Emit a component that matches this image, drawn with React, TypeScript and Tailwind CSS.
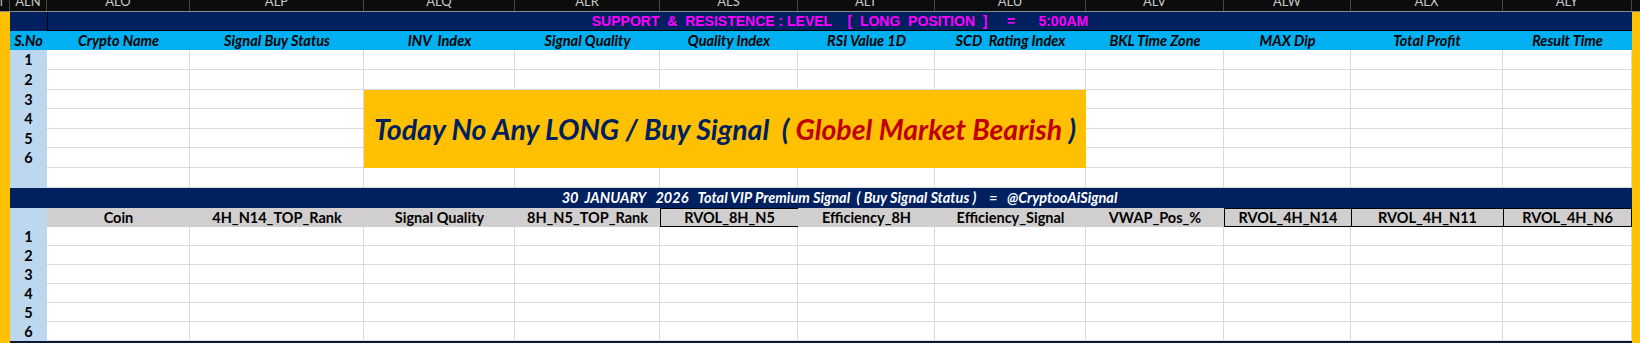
import React from "react";

// Excel-style signal sheet: column letters, two tables (long signals + VIP premium list).
const letters = ["ALN", "ALO", "ALP", "ALQ", "ALR", "ALS", "ALT", "ALU", "ALV", "ALW", "ALX", "ALY"];
const widths = [37, 143, 174, 151, 145, 138, 137, 151, 138, 127, 152, 129];

const topHeads = [
  "S.No",
  "Crypto Name",
  "Signal Buy Status",
  "INV  Index",
  "Signal Quality",
  "Quality Index",
  "RSI Value 1D",
  "SCD  Rating Index",
  "BKL Time Zone",
  "MAX Dip",
  "Total Profit",
  "Result Time",
];

const grayHeads = [
  "Coin",
  "4H_N14_TOP_Rank",
  "Signal Quality",
  "8H_N5_TOP_Rank",
  "RVOL_8H_N5",
  "Efficiency_8H",
  "Efficiency_Signal",
  "VWAP_Pos_%",
  "RVOL_4H_N14",
  "RVOL_4H_N11",
  "RVOL_4H_N6",
];

const calibri = "font-['Lato',_'Noto_Sans',_sans-serif]";

function NumCell({ n }: { n?: number }) {
  return (
    <div className={`flex items-center justify-center bg-[#bdd7ee] text-[14.5px] font-bold text-black ${calibri}`}>
      {n}
    </div>
  );
}

function Blank() {
  return <div className="border-r border-b border-[#dadada] bg-white" />;
}

function DataRow({ n, skip }: { n?: number; skip?: boolean }) {
  // skip = columns ALQ..ALU are covered by the merged yellow banner
  const cols = [1, 2, 3, 4, 5, 6, 7, 8, 9, 10, 11];
  return (
    <>
      <NumCell n={n} />
      {cols
        .filter((c) => !skip || c < 3 || c > 7)
        .map((c) => (
          <Blank key={c} />
        ))}
    </>
  );
}

export default function App() {
  return (
    <div className="h-[343px] w-[1640px] overflow-hidden bg-white">
      {/* column letters */}
      <div className="flex h-[12px] border-b border-[#8c8c8c] bg-[#0c0c0c] text-[13px] text-[#c6c6c6]">
        <div className={`flex w-[10px] shrink-0 justify-end overflow-hidden whitespace-nowrap border-r border-[#454545] pr-[6px] ${calibri}`}>
          <span className="-mt-[6px] leading-[14px]">ALM</span>
        </div>
        {letters.map((l, i) => (
          <div
            key={l}
            style={{ width: widths[i] }}
            className={`flex shrink-0 justify-center overflow-hidden border-r border-[#454545] ${calibri}`}
          >
            <span className="-mt-[6px] leading-[14px]">{l}</span>
          </div>
        ))}
        <div className="w-[8px] shrink-0" />
      </div>

      <div className="flex">
        <div className="w-[10px] shrink-0 bg-[#ffc000]" />

        <div className="grid grid-cols-[37px_143px_174px_151px_145px_138px_137px_151px_138px_127px_152px_129px] grid-rows-[19px_19px_20px_20px_19px_20px_19px_20px_20px_20px_19px_19px_19px_19px_19px_19px_19px_2px]">
          {/* title bar */}
          <div className="bg-[#002060]" />
          <div className="col-span-11 flex items-center justify-center border-b border-l border-black bg-[#002060]">
            <span className="whitespace-pre font-['Liberation_Sans',_Arial,_sans-serif] text-[14px] font-bold text-[#ff00ff]">
              {"SUPPORT  &  RESISTENCE : LEVEL    [  LONG  POSITION  ]     =      5:00AM"}
            </span>
          </div>

          {/* cyan headers */}
          {topHeads.map((h) => (
            <div
              key={h}
              className={`flex items-center justify-center whitespace-pre bg-[#00b0f0] text-[14.5px] font-bold italic text-black ${calibri}`}
            >
              {h}
            </div>
          ))}

          <div className="col-start-4 col-span-5 row-start-5 row-span-4 flex items-center justify-center bg-[#ffc000]">
            <span className={`whitespace-pre text-[28.5px] font-bold italic text-[#002060] ${calibri}`}>
              {"Today No Any LONG / Buy Signal  ( "}
              <span className="text-[#c00000]">Globel Market Bearish</span>
              {" )"}
            </span>
          </div>

          <DataRow n={1} />
          <DataRow n={2} />
          <DataRow n={3} skip />
          <DataRow n={4} skip />
          <DataRow n={5} skip />
          <DataRow n={6} skip />
          <DataRow />

          {/* VIP bar */}
          <div className="bg-[#002060]" />
          <div className="col-span-11 flex items-center justify-center bg-[#002060]">
            <span className={`whitespace-pre text-[14.5px] font-bold italic text-white ${calibri}`}>
              {"30  JANUARY   2026   Total VIP Premium Signal  ( Buy Signal Status )    =   @CryptooAiSignal"}
            </span>
          </div>

          {/* gray headers */}
          <div className="bg-[#bdd7ee]" />
          {grayHeads.map((h, i) => {
            const boxed = i === 4 || i >= 8 ? "border-l border-t border-b border-black" : "";
            const last = i === 10 ? "border-r" : "";
            return (
              <div
                key={h}
                className={`flex items-center justify-center bg-[#d0cece] text-[14.5px] font-bold text-black ${boxed} ${last} ${calibri}`}
              >
                {h}
              </div>
            );
          })}

          {[1, 2, 3, 4, 5, 6].map((n) => (
            <DataRow key={n} n={n} />
          ))}

          <div className="col-span-12 bg-[#0d1a35]" />
        </div>

        <div className="w-[8px] shrink-0 bg-[#ffc000]" />
      </div>
    </div>
  );
}
